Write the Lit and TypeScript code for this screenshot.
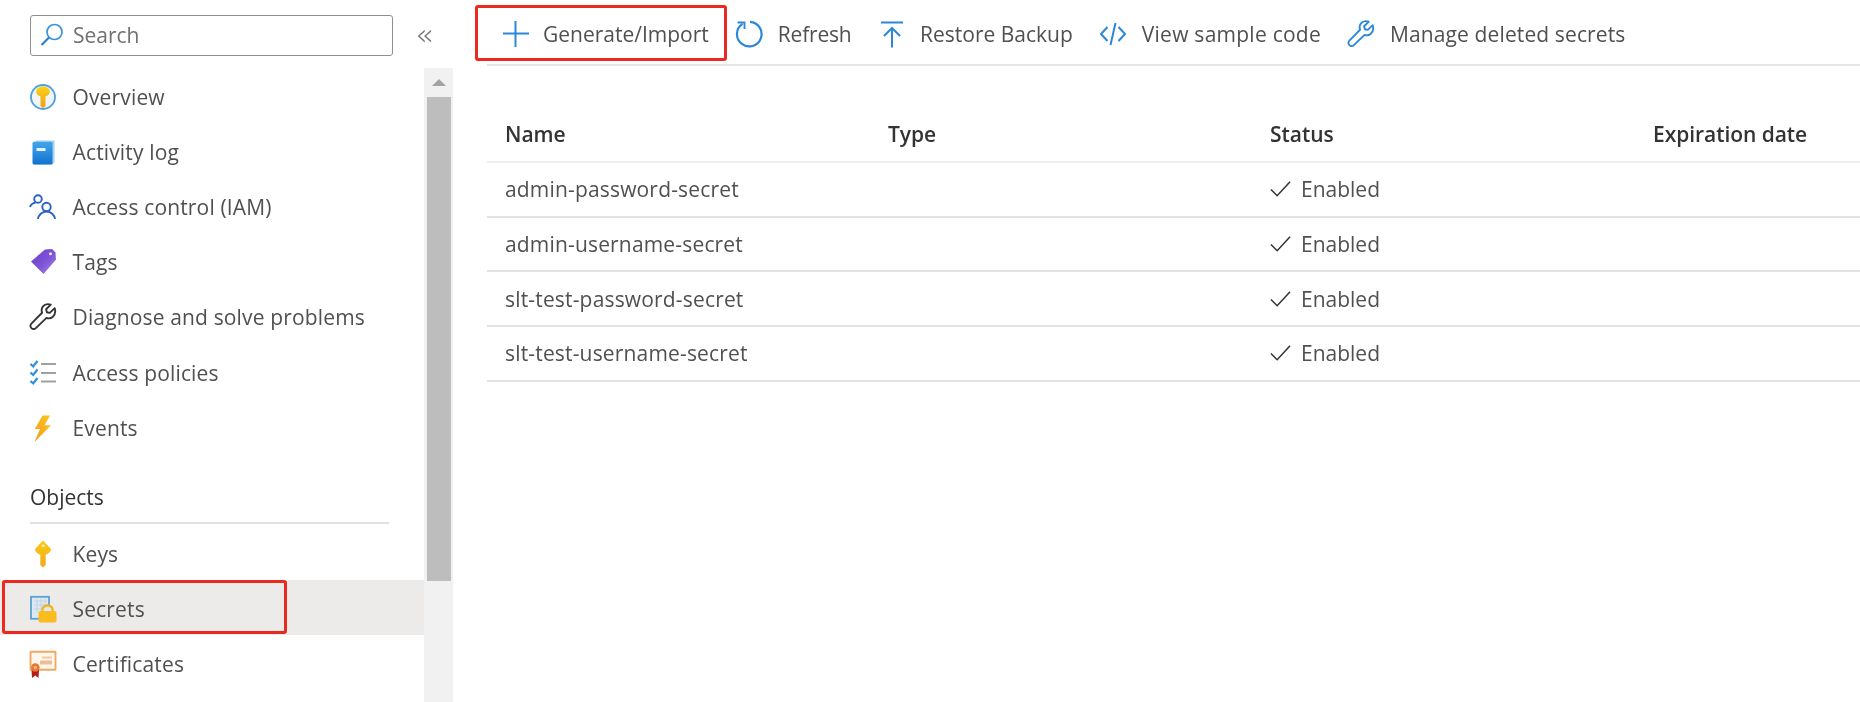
import { LitElement, html, css, svg } from "lit";
import { customElement } from "lit/decorators.js";

const ic = (body: unknown, box = "0 0 28 28") => html`<svg class="ic" viewBox=${box}>${body}</svg>`;

const icons = {
  overview: ic(svg`<defs><linearGradient id="ok" x1="0" y1="0" x2="0" y2="1"><stop offset="0" stop-color="#fcd116"/><stop offset="1" stop-color="#f0a01c"/></linearGradient></defs><circle cx="14" cy="14" r="12" fill="#eef6fc" stroke="#4f9fdc" stroke-width="1.800"/><path d="M14 3.500c-4.200 0-6.800 2.500-6.800 5.200 0 2.300 1.800 3.800 4.300 4.700V23l2.500 2 2.500-2v-9.600c2.500-.9 4.300-2.400 4.300-4.700 0-2.700-2.600-5.200-6.800-5.200z" fill="url(#ok)"/>`),
  log: ic(svg`<defs><linearGradient id="lg" x1="0" y1="0" x2="0" y2="1"><stop offset="0" stop-color="#45a5ea"/><stop offset="1" stop-color="#1172cf"/></linearGradient></defs><path d="M5 4.500 7.500 2.500H25.500V24.500L23 26.500H5z" fill="#a8d2ef"/><rect x="3.500" y="3.800" width="20" height="22.800" rx="1.500" fill="url(#lg)"/><rect x="7.500" y="10" width="9" height="3" fill="#e6f3fc"/>`),
  iam: ic(svg`<g fill="none" stroke="#2a62c4" stroke-width="1.900"><circle cx="9" cy="6" r="3.800"/><circle cx="17.500" cy="14" r="4.200"/><path d="M1 14c1-2.800 3.800-4.200 5.500-4.200M9 26c.5-4 4-7.500 8.500-7.500S25.500 22 26 26"/></g>`),
  tags: ic(svg`<defs><linearGradient id="tg" x1="0" y1="0" x2="1" y2="1"><stop offset="0" stop-color="#6a3cc8"/><stop offset=".55" stop-color="#8055d8"/><stop offset="1" stop-color="#a98aea"/></linearGradient></defs><path d="M16 1.500 23 1l3.500 3.500.5 7-12.500 14.500L2 13.500z" fill="url(#tg)"/><circle cx="21.500" cy="5.800" r="1.500" fill="#eee6fb"/>`),
  wrench: (c: string) => ic(svg`<path d="M25.300 5.500 20.500 10l-2.800-.6-.7-2.900 4.500-4.500c-3.200-.9-6.200-.1-7.700 2-1.300 1.800-1.400 3.900-.7 5.900L2.800 20.300c-1.300 1.300-1.300 3.200 0 4.400 1.200 1.200 3.100 1.200 4.300 0l10.300-9.800c2 .7 4.200.5 5.900-.9 2.300-1.900 2.900-5.300 2-8.500z" fill="none" stroke=${c} stroke-width="1.800" stroke-linejoin="round"/>`, "0.500 0.500 27 27"),
  policies: ic(svg`<g fill="none" stroke-width="2.200"><path d="M1.500 5l2.700 2.500L8.500 2M1.500 13.500 4.200 16l4.300-5.500M1.500 22l2.700 2.500 4.300-5.500" stroke="#2f8fdc"/><path d="M12 5H27M12 14H27M12 22.500H27" stroke="#a0a0a0"/></g>`),
  events: ic(svg`<defs><linearGradient id="eg" x1="1" y1="0" x2="0" y2="1"><stop offset="0" stop-color="#fbc81e"/><stop offset="1" stop-color="#f39a1c"/></linearGradient></defs><path d="M13.500 1.500h7.500l-5.500 9.700H22L5.500 28l5.500-13H5.800z" fill="url(#eg)"/>`),
  keys: ic(svg`<defs><linearGradient id="kg" x1="0" y1="0" x2="0" y2="1"><stop offset="0" stop-color="#fcc914"/><stop offset="1" stop-color="#f3a91d"/></linearGradient></defs><path d="M14 .5 6 9c0 2.800 2.500 4.800 5.300 5.800V25l2.700 2.500 2.700-2.500V14.800c2.800-1 5.300-3 5.300-5.800z" fill="url(#kg)"/><circle cx="14" cy="5.800" r="1.500" fill="#fdeab0"/>`),
  secrets: ic(svg`<rect x="2" y="1.800" width="18" height="22" fill="#dce9f3" stroke="#5ba3cf" stroke-width="1.800"/><g stroke="#bfd2df" stroke-width=".9"><path d="M5 6h13M5 10h13M5 14h13M8 4v14M12 4v14M16 4v14"/></g><path d="M13.500 17v-3.500a5.500 5.500 0 0 1 10 0V17" fill="#dce9f3" stroke="#f4b21a" stroke-width="2.200"/><rect x="9.500" y="16" width="18" height="11.500" rx="2" fill="#fabc1e"/>`),
  cert: ic(svg`<rect x="1.500" y="1.800" width="25" height="18" rx=".5" fill="#fff6ec" stroke="#eeaa64" stroke-width="1.900"/><rect x="13" y="6.500" width="10" height="2" fill="#f2c8a4"/><rect x="11" y="10.500" width="12" height="4" fill="#eebd97"/><path d="M2.500 20h7.500l-.5 8-3.200-2.500L3 28z" fill="#b71c1c"/><circle cx="6.300" cy="17.500" r="4.300" fill="#e8762c"/><circle cx="6.300" cy="17.500" r="1.700" fill="#f6b48a"/>`),
  plus: ic(svg`<path d="M13.500 1v26M1 13.500h26" stroke="#2b88d8" stroke-width="2" fill="none"/>`),
  refresh: ic(svg`<path d="M15 1.800A12.300 12.300 0 1 1 7.500 3.800" fill="none" stroke="#2b88d8" stroke-width="2.200"/><path d="M2.500 2.500h7v6.500" fill="none" stroke="#2b88d8" stroke-width="1.900"/>`),
  restore: ic(svg`<path d="M3 2.500h22M14 27.500V8M6 16l8-8 8 8" fill="none" stroke="#2b88d8" stroke-width="2"/>`),
  code: ic(svg`<path d="M8.500 7 2 14l6.500 7M19.500 7 26 14l-6.500 7M16.500 3l-5 22" fill="none" stroke="#2b88d8" stroke-width="2"/>`),
  check: html`<svg class="check" viewBox="0 0 22 18"><path d="M1 9.500 7.500 16 21 1.500" fill="none" stroke="#333" stroke-width="1.600"/></svg>`,
  search: html`<svg class="ic search" viewBox="0 0 24 24"><circle cx="14.500" cy="9" r="7.500" fill="none" stroke="#3a93d8" stroke-width="1.700"/><path d="M9 14.500 1.500 22" stroke="#2b7fc8" stroke-width="2.200"/></svg>`,
};

const topItems = [
  [icons.overview, "Overview"],
  [icons.log, "Activity log"],
  [icons.iam, "Access control (IAM)"],
  [icons.tags, "Tags"],
  [icons.wrench("#333"), "Diagnose and solve problems"],
  [icons.policies, "Access policies"],
  [icons.events, "Events"],
] as const;

const secrets = ["admin-password-secret", "admin-username-secret", "slt-test-password-secret", "slt-test-username-secret"];

@customElement("app-root")
export class AppRoot extends LitElement {
  static styles = css`
    :host { display: block; width: 1860px; height: 702px; overflow: hidden; background: #fff; color: #505050;
      font-family: "Open Sans", "Noto Sans", sans-serif; font-size: 21px; }
    * { box-sizing: border-box; }
    .page { display: flex; height: 702px; filter: blur(0.35px); }
    .side { width: 453px; flex: none; display: flex; flex-direction: column; }
    .searchbar { height: 68px; display: flex; align-items: flex-start; padding: 15px 0 0 30px; }
    .search-box { width: 363px; height: 41px; border: 1.5px solid #8f8f8f; border-radius: 3px; display: flex; align-items: center; padding: 0 0 2px 9px; gap: 9px; color: #707070; }
    .ic { width: 28px; height: 28px; flex: none; }
    .ic.search { width: 24px; height: 24px; }
    .collapse { margin: 6px 0 0 22px; font-size: 30px; line-height: 28px; color: #777; font-family: "DejaVu Sans", sans-serif; font-weight: 200; }
    .nav-wrap { flex: 1; display: flex; min-height: 0; }
    .nav { flex: 1; min-width: 0; padding-top: 1px; letter-spacing: .15px; }
    .row { position: relative; height: 55.200px; display: flex; align-items: center; padding-left: 29px; gap: 15.500px; }
    .row.sel { background: #edebe9; margin: -1px 0 1px; padding-top: 2px; }
    .heading { height: 66.600px; padding: 28px 0 0 30px; color: #333; font-size: 21px; line-height: 28px; font-weight: 500; letter-spacing: 0; }
    .rule { height: 2px; margin: 0 35px 2px 30px; background: #e0e0e0; }
    .redbox { position: absolute; border: 3px solid #ea2a20; border-radius: 3px; pointer-events: none; }
    .rb-side { left: 2px; top: 0; width: 285px; height: 54px; }
    .scroll { width: 29px; flex: none; background: #f1f1f1; display: flex; flex-direction: column; align-items: center; }
    .arrow { height: 29px; display: flex; align-items: center; justify-content: center; }
    .arrow i { border: 7px solid transparent; border-top: 0; border-bottom: 7px solid #a3a3a3; }
    .thumb { width: 24px; height: 484px; background: #bdbdbd; }
    .main { flex: 1; min-width: 0; padding-left: 34px; display: flex; flex-direction: column; }
    .toolbar { position: relative; height: 66px; border-bottom: 2px solid #e6e6e6; display: flex; align-items: center; gap: 26px; padding: 4px 0 0 15px; }
    .tool { display: flex; align-items: center; gap: 15px; white-space: nowrap; }
    .tool.tight { gap: 13px; }
    .tool.refresh span { letter-spacing: -.2px; }
    .tool.restore { gap: 14.500px; }
    .tool.view span { letter-spacing: .25px; }
    .tool.manage span { letter-spacing: .12px; }
    .rb-top { left: -12px; top: 5px; width: 252px; height: 56px; }
    .table { margin-top: 40px; display: grid; grid-template-columns: 383px 382px 383px 1fr; }
    .cell { height: 54.700px; display: flex; align-items: center; padding-left: 18px; border-bottom: 2px solid #e2e2e2; gap: 10px; }
    .cell.name { letter-spacing: .17px; }
    .cell.head { height: 57px; color: #333; font-weight: 600; letter-spacing: -.05px; border-bottom-color: #f0f0f0; }
    .check { width: 21px; height: 18px; flex: none; }
  `;

  render() {
    return html`<div class="page">
      <aside class="side">
        <div class="searchbar">
          <div class="search-box">${icons.search}<span>Search</span></div>
          <span class="collapse">«</span>
        </div>
        <div class="nav-wrap">
          <nav class="nav">
            ${topItems.map(([i, t]) => html`<div class="row">${i}<span>${t}</span></div>`)}
            <div class="heading">Objects</div>
            <div class="rule"></div>
            <div class="row">${icons.keys}<span>Keys</span></div>
            <div class="row sel">${icons.secrets}<span>Secrets</span><div class="redbox rb-side"></div></div>
            <div class="row">${icons.cert}<span>Certificates</span></div>
          </nav>
          <div class="scroll"><div class="arrow"><i></i></div><div class="thumb"></div></div>
        </div>
      </aside>
      <main class="main">
        <div class="toolbar">
          <div class="redbox rb-top"></div>
          <div class="tool tight">${icons.plus}<span>Generate/Import</span></div>
          <div class="tool refresh">${icons.refresh}<span>Refresh</span></div>
          <div class="tool restore">${icons.restore}<span>Restore Backup</span></div>
          <div class="tool view">${icons.code}<span>View sample code</span></div>
          <div class="tool manage">${icons.wrench("#2b88d8")}<span>Manage deleted secrets</span></div>
        </div>
        <div class="table">
          <div class="cell head">Name</div><div class="cell head">Type</div><div class="cell head">Status</div><div class="cell head">Expiration date</div>
          ${secrets.map((s) => html`<div class="cell name">${s}</div><div class="cell"></div><div class="cell">${icons.check}<span>Enabled</span></div><div class="cell"></div>`)}
        </div>
      </main>
    </div>`;
  }
}
